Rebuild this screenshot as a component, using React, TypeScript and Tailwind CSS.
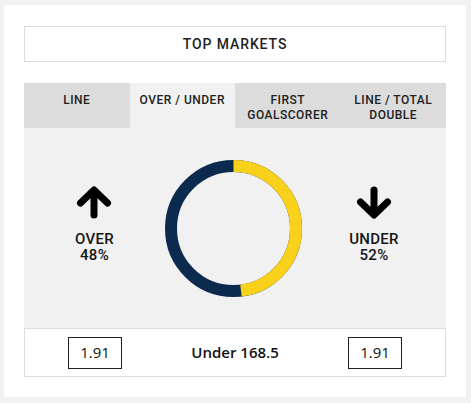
import React from 'react';

const tabs = [
    { label: ['LINE'], active: false },
    { label: ['OVER / UNDER'], active: true },
    { label: ['FIRST', 'GOALSCORER'], active: false },
    { label: ['LINE / TOTAL', 'DOUBLE'], active: false },
];

function Arrow({ down }: { down?: boolean }) {
    return (
        <svg width="36" height="33" viewBox="0 0 36 33" className={down ? 'rotate-180' : ''}>
            <path
                d="M18 6 V29 M4.5 17 L18 4 L31.5 17"
                fill="none"
                stroke="#000"
                strokeWidth="7"
                strokeLinecap="round"
                strokeLinejoin="round"
            />
        </svg>
    );
}

function Donut({ yellow }: { yellow: number }) {
    const r = 62.5;
    const c = 2 * Math.PI * r;
    return (
        <svg width="137" height="137" viewBox="0 0 137 137">
            <g transform="rotate(-90 68.5 68.5)">
                <circle cx="68.5" cy="68.5" r={r} fill="none" stroke="#0b2a4d" strokeWidth="12" />
                <circle
                    cx="68.5"
                    cy="68.5"
                    r={r}
                    fill="none"
                    stroke="#f9d11b"
                    strokeWidth="12"
                    strokeDasharray={`${c * yellow} ${c}`}
                />
            </g>
        </svg>
    );
}

function Side({ label, pct, down }: { label: string; pct: string; down?: boolean }) {
    return (
        <div className="flex flex-col items-center pb-[7px]">
            <Arrow down={down} />
            <div className="mt-[12px] text-[15px] leading-[16px] font-medium text-center tracking-[0.3px] text-[#151515]">
                <div>{label}</div>
                <div>{pct}</div>
            </div>
        </div>
    );
}

export default function App() {
    return (
        <div className="min-h-screen bg-[#f1f1f1] pl-[4px] pt-[5px] pr-[5px] pb-[6px] font-['Roboto',sans-serif] text-[#1a1a1a]">
            <div className="bg-white px-[20px] pt-[21px] pb-[20px]">
                <div className="h-[36px] border border-[#dddddd] flex items-center justify-center text-[14px] font-medium tracking-[0.9px] text-[#1e1e1e]">
                    TOP MARKETS
                </div>

                <div className="mt-[21px] grid grid-cols-4 h-[45px]">
                    {tabs.map((t) => (
                        <div
                            key={t.label.join(' ')}
                            className={`flex flex-col items-center pt-[10px] text-[12px] leading-[14.5px] font-medium tracking-[0.5px] text-[#222] ${t.active ? 'bg-[#f1f1f1]' : 'bg-[#dcdcdc]'}`}
                        >
                            {t.label.map((l) => (
                                <span key={l}>{l}</span>
                            ))}
                        </div>
                    ))}
                </div>

                <div className="h-[200px] bg-[#f1f1f1] flex items-center">
                    <div className="w-[141px] flex justify-center">
                        <Side label="OVER" pct="48%" />
                    </div>
                    <div className="w-[137px] flex justify-center">
                        <Donut yellow={0.48} />
                    </div>
                    <div className="flex-1 flex justify-center">
                        <Side label="UNDER" pct="52%" down />
                    </div>
                </div>

                <div className="h-[49px] border border-[#dddddd] grid grid-cols-3 items-center font-['Open_Sans',sans-serif] text-[15px] text-[#111]">
                    <div className="flex justify-center">
                        <div className="w-[54px] h-[32px] border border-[#222] flex items-center justify-center">1.91</div>
                    </div>
                    <div className="text-center font-semibold">Under 168.5</div>
                    <div className="flex justify-center">
                        <div className="w-[54px] h-[32px] border border-[#222] flex items-center justify-center">1.91</div>
                    </div>
                </div>
            </div>
        </div>
    );
}
